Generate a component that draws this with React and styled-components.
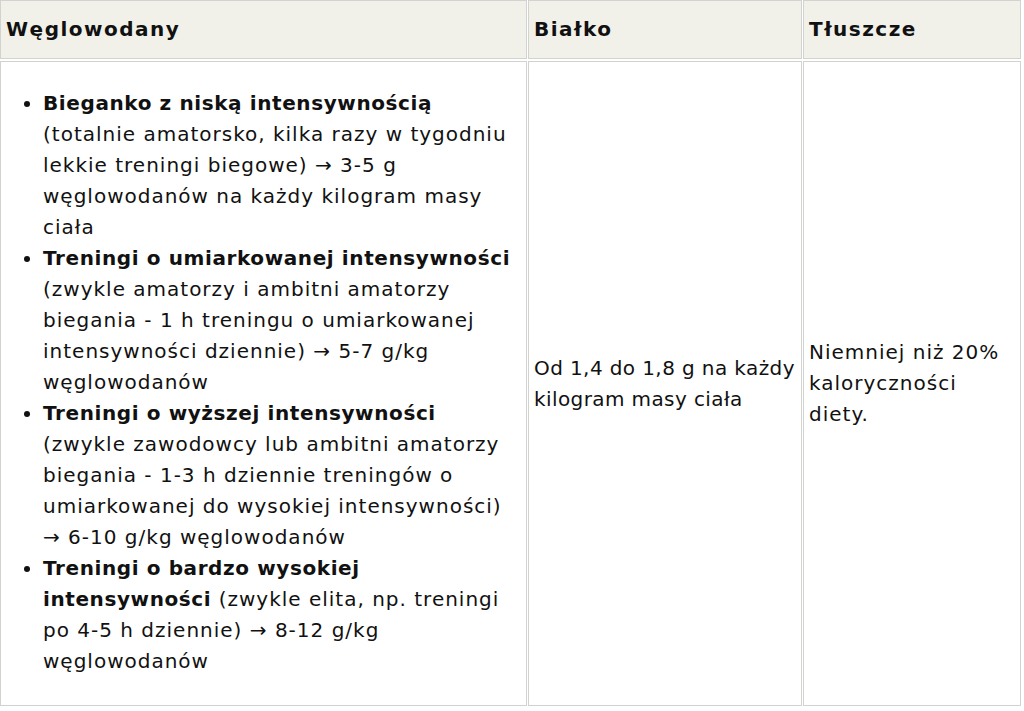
import React from "react";
import styled, { createGlobalStyle } from "styled-components";

const GlobalStyle = createGlobalStyle`
  html, body {
    margin: 0;
    padding: 0;
    background: #ffffff;
  }
  body {
    font-family: "DejaVu Sans", "Noto Sans", sans-serif;
    color: #111111;
  }
`;

// każda linia: [pogrubiona część, zwykła część]
const items = [
  [
    ["Bieganko z niską intensywnością", ""],
    ["", "(totalnie amatorsko, kilka razy w tygodniu"],
    ["", "lekkie treningi biegowe) → 3-5 g"],
    ["", "węglowodanów na każdy kilogram masy"],
    ["", "ciała"],
  ],
  [
    ["Treningi o umiarkowanej intensywności", ""],
    ["", "(zwykle amatorzy i ambitni amatorzy"],
    ["", "biegania - 1 h treningu o umiarkowanej"],
    ["", "intensywności dziennie) → 5-7 g/kg"],
    ["", "węglowodanów"],
  ],
  [
    ["Treningi o wyższej intensywności", ""],
    ["", "(zwykle zawodowcy lub ambitni amatorzy"],
    ["", "biegania - 1-3 h dziennie treningów o"],
    ["", "umiarkowanej do wysokiej intensywności)"],
    ["", "→ 6-10 g/kg węglowodanów"],
  ],
  [
    ["Treningi o bardzo wysokiej", ""],
    ["intensywności", " (zwykle elita, np. treningi"],
    ["", "po 4-5 h dziennie) → 8-12 g/kg"],
    ["", "węglowodanów"],
  ],
];

export default function App() {
  return (
    <>
      <GlobalStyle />
      <Table>
        <HeadCell>Węglowodany</HeadCell>
        <HeadCell>Białko</HeadCell>
        <HeadCell>Tłuszcze</HeadCell>

        <BodyCell>
          <List>
            {items.map((lines, i) => (
              <Item key={i}>
                {lines.map(([b, t], j) => (
                  <Line key={j}>
                    {b && <Strong>{b}</Strong>}
                    {t}
                  </Line>
                ))}
              </Item>
            ))}
          </List>
        </BodyCell>
        <BodyCell $center $tight>
          <Line>Od 1,4 do 1,8 g na każdy</Line>
          <Line>kilogram masy ciała</Line>
        </BodyCell>
        <BodyCell $center>
          <Line>Niemniej niż 20%</Line>
          <Line>kaloryczności</Line>
          <Line>diety.</Line>
        </BodyCell>
      </Table>
    </>
  );
}

// tabela w układzie grid
const Table = styled.div`
  display: grid;
  grid-template-columns: 527px 274px 218px;
  grid-template-rows: 59px 645px;
  column-gap: 1px;
  row-gap: 2px;
  width: 1021px;
`;

const Cell = styled.div`
  box-sizing: border-box;
  border: 1px solid #d2d2d0;
  padding: 0 5px;
  font-size: 20px;
  line-height: 31px;
  letter-spacing: 1px;
`;

const HeadCell = styled(Cell)`
  display: flex;
  align-items: center;
  background-color: #f1f1ea;
  font-weight: bold;
  letter-spacing: 1.5px;
  padding-bottom: 1px;
`;

const BodyCell = styled(Cell)`
  display: flex;
  flex-direction: column;
  justify-content: ${(p) => (p.$center ? "center" : "flex-start")};
  letter-spacing: ${(p) => (p.$tight ? "0.4px" : "1px")};
`;

const List = styled.ul`
  margin: 26px 0 0 0;
  padding-left: 37px;
`;

const Item = styled.li``;

const Line = styled.span`
  display: block;
  white-space: nowrap;
  ${Item} &:first-child {
    display: inline;
  }
  ${Item} &:first-child::after {
    content: "";
    display: block;
  }
`;

const Strong = styled.strong`
  font-weight: bold;
  letter-spacing: 0.6px;
`;
